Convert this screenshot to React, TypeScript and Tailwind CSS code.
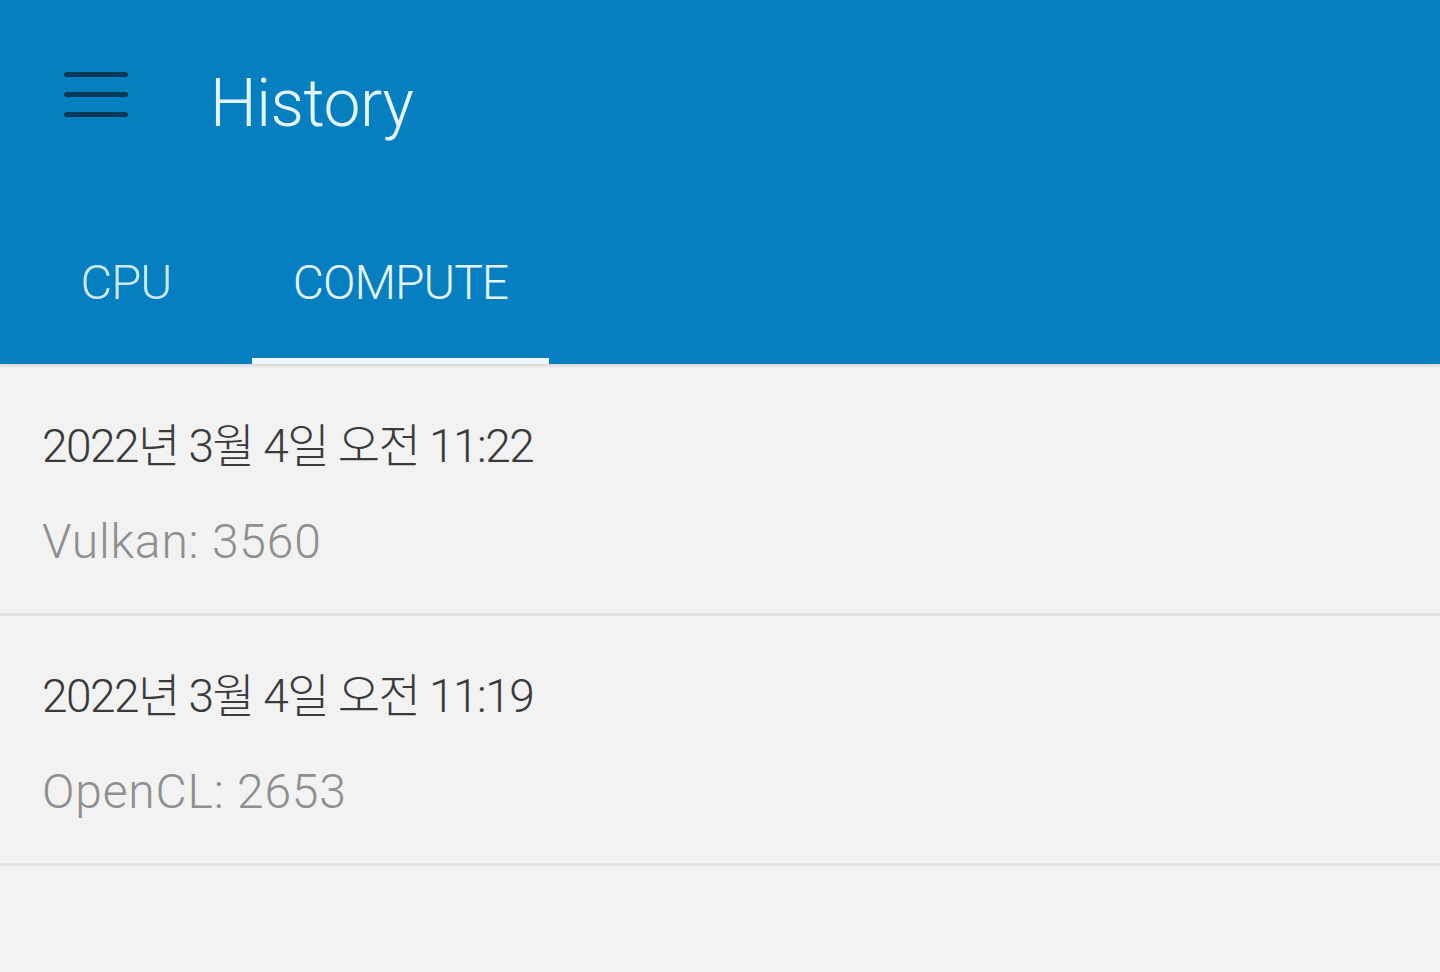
import React from 'react';

interface Entry {
  date: string;
  score: string;
}

const entries: Entry[] = [
  { date: '2022년 3월 4일 오전 11:22', score: 'Vulkan: 3560' },
  { date: '2022년 3월 4일 오전 11:19', score: 'OpenCL: 2653' },
];

const font = { fontFamily: 'Roboto, "Noto Sans CJK KR", sans-serif' };

const App: React.FC = () => {
  return (
    <div className="w-[1440px] h-[972px] bg-[#f2f2f2] overflow-hidden" style={font}>
      <div className="bg-[#067fc1] h-[364px] flex flex-col shadow-[0_2px_3px_rgba(0,0,0,0.12)] relative">
        <div className="flex items-center h-[200px] pb-[6px]">
          <div className="w-[64px] ml-[64px] flex flex-col gap-[15px] mt-[-5px]">
            <div className="h-[5px] bg-[#0b3a58] rounded-sm" />
            <div className="h-[5px] bg-[#0b3a58] rounded-sm" />
            <div className="h-[5px] bg-[#0b3a58] rounded-sm" />
          </div>
          <h1 className="ml-[82px] mt-[12px] text-[66px] font-light text-[#e6f4fd] tracking-[-0.5px]">History</h1>
        </div>
        <div className="flex mt-auto h-[164px]">
          <div className="w-[252px] flex items-center justify-center pt-[2px]">
            <span className="text-[49px] font-light text-[#cfe8f7] tracking-[-1px]">CPU</span>
          </div>
          <div className="w-[297px] flex flex-col">
            <div className="flex-1 flex items-center justify-center pt-[8px]">
              <span className="text-[48px] font-light text-[#e4f3fc] tracking-[-1px]">COMPUTE</span>
            </div>
            <div className="h-[6px] bg-[#eef8fe]" />
          </div>
        </div>
      </div>
      <div className="pt-[2px]">
        {entries.map((e) => (
          <div key={e.date} className="h-[250px] border-b-[3px] border-[#e4e4e4] pl-[42px] pt-[50px]">
            <p className="text-[46px] font-light text-[#3a3a3a] leading-[60px] tracking-[-1.5px]">{e.date}</p>
            <p className="mt-[36px] text-[48px] font-light text-[#8f8f8f] leading-[60px] tracking-[0.8px]">{e.score}</p>
          </div>
        ))}
      </div>
    </div>
  );
};

export default App;
